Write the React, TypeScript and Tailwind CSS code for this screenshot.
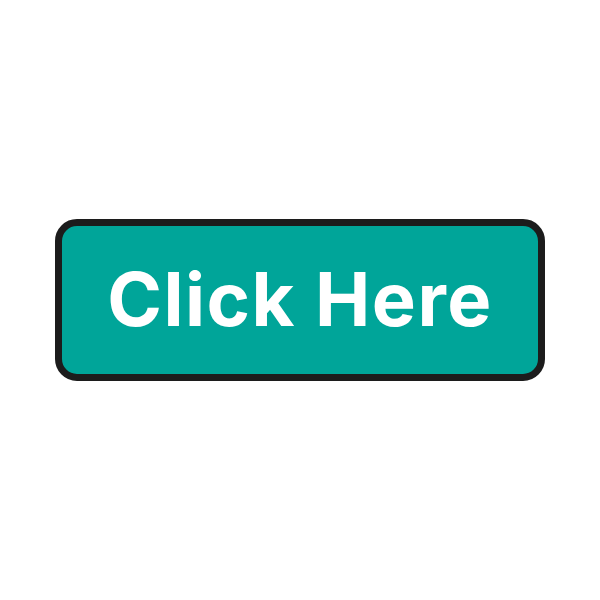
export default function App() {
  return (
    <div className="w-[600px] h-[600px] bg-white flex items-center justify-center">
      <div className="w-[490px] h-[162px] rounded-[22px] border-[7px] border-[#1c1c1c] bg-[#00a599] flex items-center justify-center">
        <span
          className="text-white font-bold text-[74px] leading-none pb-[2px] tracking-[1.5px]"
          style={{ fontFamily: "Inter, 'Open Sans', sans-serif" }}
        >
          Click Here
        </span>
      </div>
    </div>
  );
}
